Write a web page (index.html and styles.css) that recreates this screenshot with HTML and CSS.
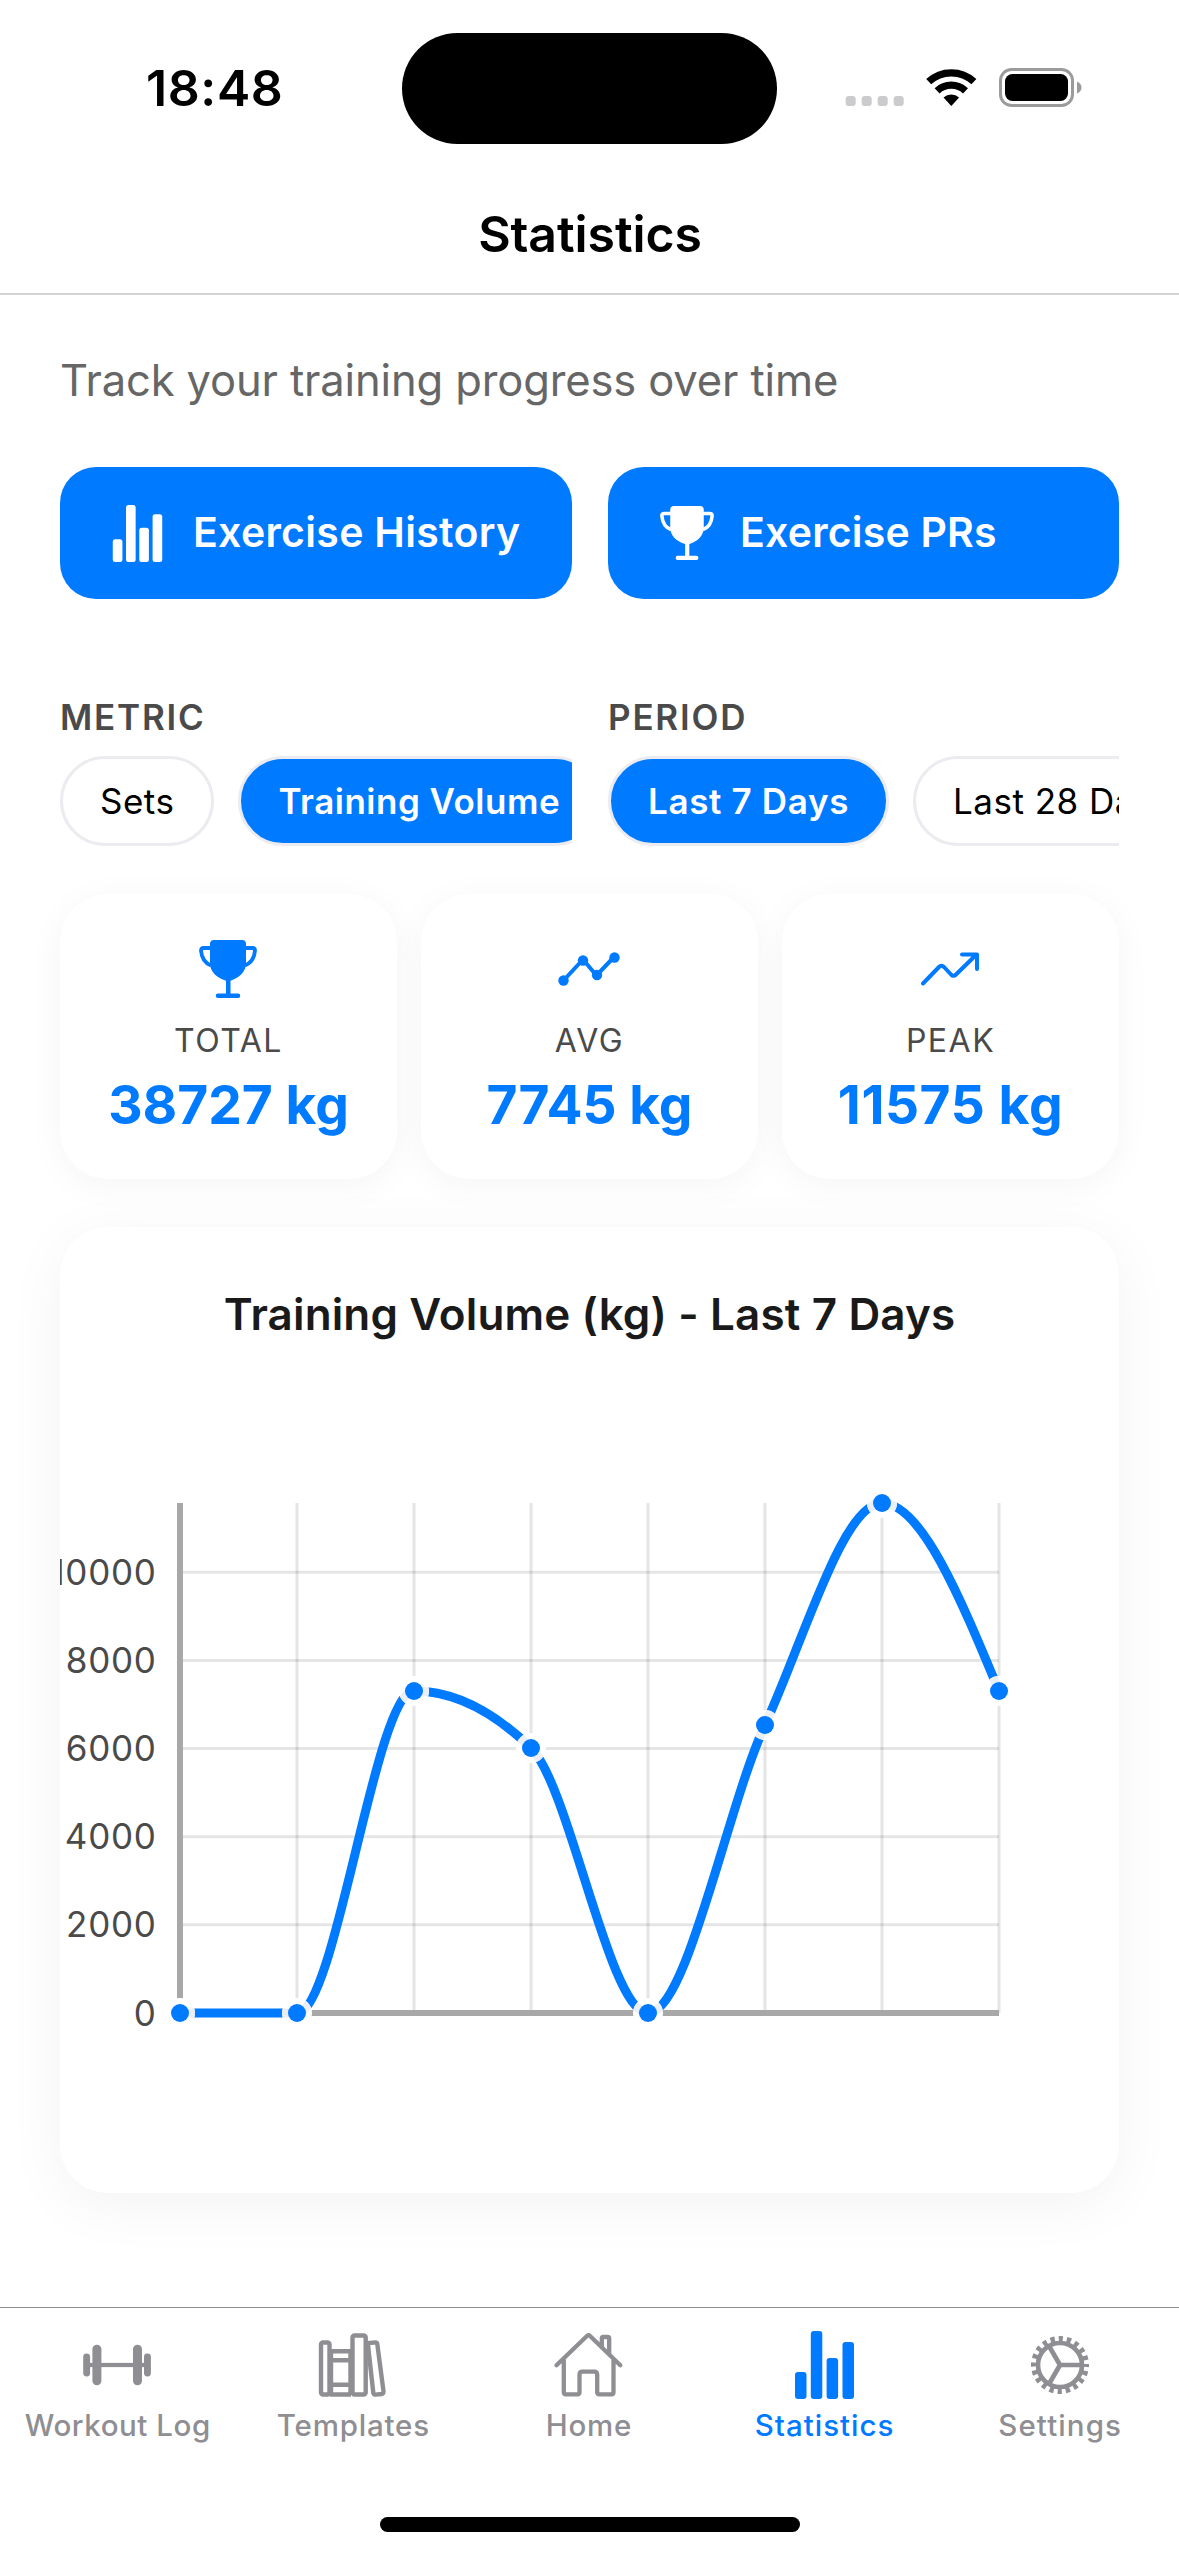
FILE: index.html
```html
<!DOCTYPE html>
<html lang="en">
<head>
<meta charset="utf-8">
<title>Statistics</title>
<link rel="stylesheet" href="styles.css">
</head>
<body>
<svg class="defs" width="0" height="0" aria-hidden="true">
  <symbol id="trophy" viewBox="0 0 58 58">
    <path fill="currentColor" d="M15 0h28a4 4 0 0 1 4 4v19c0 9-7 15-15.500 17.800v12.700h7.500a2 2 0 0 1 0 4.500h-20a2 2 0 0 1 0-4.500h8v-12.700C18 38 11 32 11 23V4a4 4 0 0 1 4-4z"/>
    <path fill="none" stroke="currentColor" stroke-width="3.800" d="M12 8H4.500Q2 8 2 10.500C2.500 17 6 23 12 25.500M46 8h7.500q2.500 0 2.500 2.500C55.500 17 52 23 46 25.500"/>
  </symbol>
  <symbol id="bars" viewBox="0 0 59 68">
    <g fill="currentColor"><rect y="41" width="11.500" height="27" rx="3"/><rect x="15.800" width="11.500" height="68" rx="3"/><rect x="31.600" y="27" width="11.500" height="41" rx="3"/><rect x="47.500" y="11" width="11.500" height="57" rx="3"/></g>
  </symbol>
</svg>
<div class="screen">
  <header class="header">
    <div class="status">
      <span class="time">18:48</span>
      <span class="island"></span>
      <svg class="signals" width="240" height="40" viewBox="0 0 240 40">
        <g fill="#cbcbcd"><rect x="1.700" y="28" width="10" height="10" rx="3"/><rect x="17.700" y="28" width="10" height="10" rx="3"/><rect x="33.700" y="28" width="10" height="10" rx="3"/><rect x="49.700" y="28" width="10" height="10" rx="3"/></g>
        <g fill="none" stroke="#000" stroke-width="7.300"><path d="M84.700 13.700A33.200 33.200 0 0 1 129.900 13.700"/><path d="M93.100 22.800A20.800 20.800 0 0 1 121.500 22.800"/></g>
        <path d="M107.300 38l-7.800-8.400A11.500 11.500 0 0 1 115.100 29.600z"/>
        <rect x="156.500" y="1.500" width="72" height="36" rx="11" fill="none" stroke="#9b9b9b" stroke-width="3"/>
        <rect x="161" y="6" width="63" height="27" rx="7.500"/>
        <path d="M233 13.500q4.500 2 4.500 6t-4.500 6z" fill="#9b9b9b"/>
      </svg>
    </div>
    <h1 class="title">Statistics</h1>
  </header>
  <main class="content">
    <p class="subtitle">Track your training progress over time</p>
    <div class="actions">
      <button class="action"><svg class="action-bars"><use href="#bars"/></svg><span class="action-history">Exercise History</span></button>
      <button class="action"><svg class="action-trophy"><use href="#trophy"/></svg><span class="action-records">Exercise PRs</span></button>
    </div>
    <div class="filters">
      <section class="filter">
        <h2 class="label">METRIC</h2>
        <div class="pills"><span class="pill">Sets</span><span class="pill on">Training Volume</span></div>
      </section>
      <section class="filter">
        <h2 class="label">PERIOD</h2>
        <div class="pills"><span class="pill on pill-week">Last 7 Days</span><span class="pill">Last 28 Days</span></div>
      </section>
    </div>
    <div class="stats">
      <article class="card stat"><svg class="stat-icon" width="58" height="58"><use href="#trophy"/></svg><span class="stat-name">TOTAL</span><strong class="stat-value">38727 kg</strong></article>
      <article class="card stat"><svg class="stat-icon" width="62" height="58" viewBox="0 0 62 58"><path d="M5.500 40.500L25 19.500 38.500 35.500 56.500 16.500" fill="none" stroke="currentColor" stroke-width="4"/><g fill="currentColor"><circle cx="5.500" cy="40.500" r="5.200"/><circle cx="25" cy="20.500" r="5.200"/><circle cx="39" cy="35" r="5.200"/><circle cx="56.500" cy="17.500" r="5.200"/></g></svg><span class="stat-name">AVG</span><strong class="stat-value">7745 kg</strong></article>
      <article class="card stat"><svg class="stat-icon" width="58" height="58" viewBox="0 0 58 58"><path d="M2 43.500L18 27q2.500-2.500 5 0l7 7.500q2.500 2.500 5 0L55.500 14.500M41 14.500H56V29" fill="none" stroke="currentColor" stroke-width="4" stroke-linecap="round" stroke-linejoin="round"/></svg><span class="stat-name">PEAK</span><strong class="stat-value stat-peak">11575 kg</strong></article>
    </div>
    <article class="card chart">
      <h2 class="chart-title">Training Volume (kg) - Last 7 Days</h2>
      <svg class="plot" width="1059" height="840" viewBox="60 1353 1059 840">
        <defs><clipPath id="halos"><circle cx="180" cy="2013" r="15"/><circle cx="297" cy="2013" r="15"/><circle cx="414" cy="1691" r="15"/><circle cx="531" cy="1748" r="15"/><circle cx="648" cy="2013" r="15"/><circle cx="765" cy="1725" r="15"/><circle cx="882" cy="1503" r="15"/><circle cx="999" cy="1691" r="15"/></clipPath></defs>
        <g class="grid"><path d="M180 1572.200H999M180 1660.400H999M180 1748.500H999M180 1836.700H999M180 1924.800H999M180 2013H999"/><path d="M180 1503V2013M297 1503V2013M414 1503V2013M531 1503V2013M648 1503V2013M765 1503V2013M882 1503V2013M999 1503V2013"/></g>
        <path class="axis" d="M180 1503V2013M180 2013H999"/>
        <g class="ticks"><text x="156.500" y="1585">10000</text><text x="156.500" y="1673">8000</text><text x="156.500" y="1761">6000</text><text x="156.500" y="1849">4000</text><text x="156.500" y="1937">2000</text><text x="156.500" y="2025.500">0</text></g>
        <path class="line" d="M180 2013H297C336 2013 375 1691 414 1691C453 1691 492 1710 531 1748C570 1786 609 2013 648 2013C687 2013 726 1810 765 1725C804 1640 843 1503 882 1503C921 1503 960 1597 999 1691"/>
        <g fill="#fff"><circle cx="180" cy="2013" r="15"/><circle cx="297" cy="2013" r="15"/><circle cx="414" cy="1691" r="15"/><circle cx="531" cy="1748" r="15"/><circle cx="648" cy="2013" r="15"/><circle cx="765" cy="1725" r="15"/><circle cx="882" cy="1503" r="15"/><circle cx="999" cy="1691" r="15"/></g>
        <path class="line-faded" clip-path="url(#halos)" d="M180 2013H297C336 2013 375 1691 414 1691C453 1691 492 1710 531 1748C570 1786 609 2013 648 2013C687 2013 726 1810 765 1725C804 1640 843 1503 882 1503C921 1503 960 1597 999 1691"/>
        <g fill="#007aff"><circle cx="180" cy="2013" r="9"/><circle cx="297" cy="2013" r="9"/><circle cx="414" cy="1691" r="9"/><circle cx="531" cy="1748" r="9"/><circle cx="648" cy="2013" r="9"/><circle cx="765" cy="1725" r="9"/><circle cx="882" cy="1503" r="9"/><circle cx="999" cy="1691" r="9"/></g>
      </svg>
    </article>
  </main>
  <nav class="tabs">
    <a class="tab tab-log"><svg width="72" height="72" viewBox="0 0 72 72"><g fill="currentColor"><rect x="1.200" y="24.500" width="6.900" height="23" rx="3.400"/><rect x="10.400" y="15.800" width="9" height="40.400" rx="4.500"/><rect x="51" y="15.800" width="9" height="40.400" rx="4.500"/><rect x="62" y="24.500" width="6.900" height="23" rx="3.400"/><rect x="5" y="33.900" width="60" height="4.200"/></g></svg><span>Workout Log</span></a>
    <a class="tab"><svg width="72" height="72" viewBox="0 0 72 72"><g fill="none" stroke="currentColor" stroke-width="4.400"><rect x="4" y="13.500" width="8.500" height="52" rx="2"/><path d="M13 22.300H34M13 31.300H34M13 55.700H34M13 65.500H34M14 22V65M33.500 22V65"/><rect x="35.500" y="6.500" width="13.200" height="59" rx="2"/><path d="M50.800 14.300L58 13.400Q60 13.300 60.300 15L66.500 62.500Q66.500 64.500 64.800 65L58.500 65.600Q56.800 65.600 56.300 63.800z"/></g></svg><span>Templates</span></a>
    <a class="tab"><svg width="72" height="72" viewBox="0 0 72 72"><g fill="none" stroke="currentColor" stroke-width="4.300" stroke-linecap="round" stroke-linejoin="round"><path d="M3.500 36.300L34.200 6.700q1.300-1.300 2.600 0L67.300 36.300M10.800 31V63.300q0 2 2 2H24.500q2 0 2-2V45.700q0-3 3-3H41.200q3 0 3 3V63.300q0 2 2 2H58.500q2 0 2-2V31M48.800 17V9.500q0-1.500 1.500-1.500h4.400q1.500 0 1.500 1.500V24"/></g></svg><span>Home</span></a>
    <a class="tab active tab-stats"><svg width="59" height="72" viewBox="0 0 59 72"><use href="#bars" y="2" width="59" height="68"/></svg><span>Statistics</span></a>
    <a class="tab tab-settings"><svg width="72" height="72" viewBox="0 0 72 72"><g fill="none" stroke="currentColor" transform="translate(36 36)"><circle r="22" stroke-width="4.600"/><circle r="26.200" stroke-width="5.600" stroke-dasharray="4.231 4" stroke-dashoffset="2.100"/><path stroke-width="4.700" d="M0 0H22M0 0L-11 -19M0 0L-11 19"/></g></svg><span>Settings</span></a>
  </nav>
  <div class="home-indicator"></div>
</div>
</body>
</html>
```
FILE: styles.css
```css
* { box-sizing: border-box; }
body { margin: 0; background: #fff; font-family: Inter, "Liberation Sans", sans-serif; color: #000; }
h1, h2, p { margin: 0; }
.defs { position: absolute; }
.screen { width: 1179px; height: 2556px; display: flex; flex-direction: column; overflow: hidden; }
.header { height: 295px; border-bottom: 2px solid #d3d3d3; flex: none; }
.status { height: 177px; display: grid; grid-template-columns: 402px 375px 402px; align-items: center; }
.time { padding: 0 0 2px 146px; font-size: 50px; font-weight: 600; letter-spacing: .6px; }
.island { height: 111px; border-radius: 56px; background: #000; }
.signals { margin: -1px 0 0 67px; }
.title { text-align: center; font-size: 50px; font-weight: 600; line-height: 60px; margin-top: 27px; padding-left: 1px; letter-spacing: -.1px; }
.content { padding: 0 60px; flex: 1; }
.subtitle { padding-top: 57px; font-size: 43.5px; line-height: 56px; letter-spacing: -.13px; color: #666; white-space: nowrap; }
.actions { margin-top: 59px; display: grid; grid-template-columns: 512px 511px; gap: 36px; }
.action { height: 132px; border: 0; border-radius: 36px; background: #007aff; color: #fff; font: 600 41px/50px Inter, sans-serif; display: flex; align-items: center; padding: 0 0 0 52px; white-space: nowrap; }
.action span { padding-bottom: 2px; }
.action-history { letter-spacing: .3px; }
.action-records { letter-spacing: .2px; }
.action-bars { width: 51px; height: 57px; margin-right: 30px; }
.action-trophy { width: 54px; height: 54px; margin-right: 26px; }
.filters { margin-top: 96px; display: grid; grid-template-columns: 512px 511px; gap: 36px; }
.filter { overflow: hidden; }
.label { font-size: 35px; line-height: 44px; font-weight: 600; color: #4a4a4a; letter-spacing: 1.8px; }
.pills { margin-top: 17px; display: flex; gap: 24px; }
.pill { flex: none; height: 90px; border: 3px solid #ebebf0; border-radius: 45px; padding: 0 37px; font-size: 35px; line-height: 84px; white-space: nowrap; letter-spacing: .5px; }
.pill.on { background: #007aff; color: #fff; font-weight: 600; }
.pill-week { letter-spacing: .65px; }
.stats { margin-top: 48px; display: grid; grid-template-columns: repeat(3, 337px); gap: 24px; }
.card { background: #fff; border-radius: 48px; box-shadow: 0 6px 36px rgba(0, 0, 0, .045); }
.stat { height: 285px; padding-top: 46px; display: flex; flex-direction: column; align-items: center; color: #007aff; white-space: nowrap; }
.stat-icon { margin-right: 2px; }
.stat-name { margin-top: 23px; font-size: 32px; line-height: 40px; color: #4a4a4a; letter-spacing: 1.5px; }
.stat-value { margin-top: 12px; font-size: 53.3px; line-height: 64px; font-weight: 700; }
.stat-peak { letter-spacing: .6px; }
.chart { margin-top: 48px; height: 966px; overflow: hidden; box-shadow: 0 12px 60px rgba(0, 0, 0, .05); }
.chart-title { padding-top: 59px; height: 126px; text-align: center; font-size: 44px; line-height: 56px; letter-spacing: .13px; font-weight: 600; color: #1a1a1a; white-space: nowrap; }
.plot { display: block; }
.grid path { stroke: rgba(0, 0, 0, .1); stroke-width: 3; fill: none; }
.axis { stroke: #a8a8a8; stroke-width: 6; fill: none; }
.ticks { font-size: 35px; fill: #4a4a4a; text-anchor: end; letter-spacing: .7px; }
.line { fill: none; stroke: #007aff; stroke-width: 9; }
.line-faded { fill: none; stroke: #ebeef3; stroke-width: 9; }
.tabs { height: 180px; border-top: 1px solid #8e8e93; display: grid; grid-template-columns: repeat(5, 235.6px); flex: none; }
.tab { display: flex; flex-direction: column; align-items: center; padding-top: 21px; color: #8e8e93; font-size: 29.5px; line-height: 36px; font-weight: 500; letter-spacing: .8px; white-space: nowrap; }
.tab span { margin-top: 6px; }
.tab.active { color: #007aff; }
.tab-log { letter-spacing: .55px; }
.tab-stats { letter-spacing: 1px; }
.tab-settings { letter-spacing: 1.1px; }
.home-indicator { width: 420px; height: 15px; border-radius: 8px; background: #000; margin: 30px auto 24px; flex: none; }
```
